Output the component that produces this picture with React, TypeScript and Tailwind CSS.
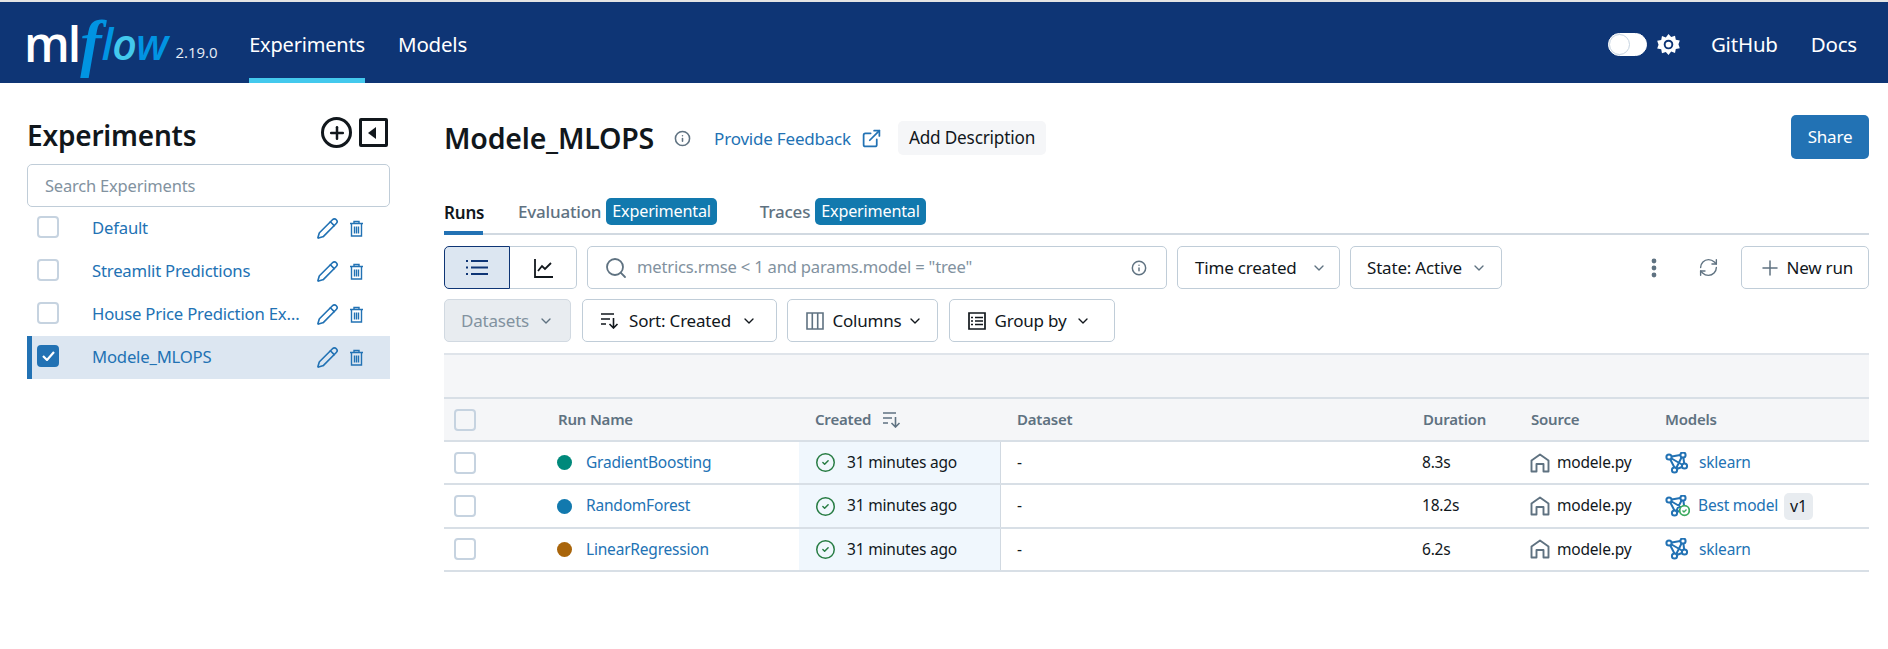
import { ChevronDown, CircleCheck, ExternalLink, Info, Pencil, Plus, RefreshCw, Search } from 'lucide-react';
import type { ReactNode } from 'react';

const experiments = [
	{ name: 'Default', active: false },
	{ name: 'Streamlit Predictions', active: false },
	{ name: 'House Price Prediction Experiment', active: false },
	{ name: 'Modele_MLOPS', active: true },
];

const runs = [
	{ name: 'GradientBoosting', dot: 'bg-[#00897b]', duration: '8.3s', model: 'sklearn', best: false },
	{ name: 'RandomForest', dot: 'bg-[#1279ae]', duration: '18.2s', model: 'Best model', best: true },
	{ name: 'LinearRegression', dot: 'bg-[#a9650b]', duration: '6.2s', model: 'sklearn', best: false },
];

const TrashIcon = () => (
	<svg width="15" height="17" viewBox="0 0 15 17" fill="none" stroke="currentColor" strokeWidth="1.4" className="text-[#2272b4]">
		<path d="M1 3.5h13M5 3.5V1.5h5v2M2.5 3.5v12.5h10V3.5M5.5 6.5v7M7.5 6.5v7M9.5 6.5v7" />
	</svg>
);

const SortIcon = ({ color = 'text-[#11171c]' }: { color?: string }) => (
	<svg width="19" height="17" viewBox="0 0 19 17" fill="none" stroke="currentColor" strokeWidth="1.6" className={color}>
		<path d="M1 2h13M1 7h9M1 12h5M13.5 6v10M9.5 12l4 4 4-4" />
	</svg>
);

const HouseIcon = () => (
	<svg width="20" height="20" viewBox="0 0 20 20" fill="none" stroke="#5f7281" strokeWidth="1.9" className="shrink-0">
		<path d="M1.5 18.5V7.5L10 1.5l8.5 6v11h-5V11h-7v7.5z" strokeLinejoin="round" />
	</svg>
);

const ModelIcon = ({ best }: { best: boolean }) => (
	<svg width="25" height="22" viewBox="0 0 25 22" fill="none" className="shrink-0">
		<g stroke="#2272b4" strokeWidth="2">
			<path d="M4 5l14-2.5M4 5l6.5 12.5M4 5l15.5 9M18 2.5l1.5 11.5M10.5 17.5l9-3.5M18 2.5l-7.5 15" />
			<circle cx="4" cy="5" r="2.6" fill="white" />
			<circle cx="18" cy="3" r="2.6" fill="white" />
			<circle cx="19.5" cy="14" r="2.6" fill="white" />
			<circle cx="9.5" cy="18" r="2.6" fill="white" />
		</g>
		{best && (
			<g>
				<circle cx="19.5" cy="15.5" r="4.8" fill="white" stroke="#3caa60" strokeWidth="1.8" />
				<path d="M17.5 15.5l1.5 1.5 2.5-2.5" stroke="#3caa60" strokeWidth="1.4" />
			</g>
		)}
	</svg>
);

const ToolbarButton = ({ children, className }: { children: ReactNode; className: string }) => (
	<div className={`h-[43px] shrink-0 flex items-center justify-between bg-white border border-[#c0cdd8] rounded-[5px] text-[#11171c] whitespace-nowrap ${className}`}>
		{children}
	</div>
);

const Checkbox = ({ checked = false }: { checked?: boolean }) => (
	<div className={`w-[22px] h-[22px] rounded-[4px] flex items-center justify-center border-2 ${checked ? 'bg-[#2272b4] border-[#2272b4]' : 'bg-white border-[#c6d3e0]'}`}>
		{checked && (
			<svg width="13" height="10" viewBox="0 0 13 10" fill="none" stroke="white" strokeWidth="2.2">
				<path d="M1 5l4 4 7-8" />
			</svg>
		)}
	</div>
);

const Badge = () => (
	<span className="h-[27px] px-[6px] bg-[#1279ae] text-white rounded-[5px] flex items-center text-[16.2px] font-normal">Experimental</span>
);

const App = () => {
	return (
		<div className="w-[1888px] h-[649px] overflow-hidden bg-white text-[#11171c] font-['Noto_Sans',sans-serif] text-[15.5px] tracking-[-0.2px]">
			<div className="h-[2px] bg-[#e4e4e4]" />

			{/* Header */}
			<header className="h-[81px] bg-[#0e3575] flex items-stretch justify-between pl-[24px] pr-[31px] text-white">
				<div className="flex items-stretch">
					<div className="w-[193px] flex items-center shrink-0 pt-[2px] font-['Open_Sans',sans-serif] tracking-normal">
						<span className="text-[48px] leading-none font-semibold tracking-[-2px]">ml</span>
						<span className="text-[64px] leading-none italic font-bold text-[#0194e2] ml-[1px] -mt-[2px] font-['Liberation_Serif',serif]">f</span>
						<span className="text-[43px] leading-none italic font-semibold text-[#0194e2] tracking-[-1px]">l</span>
						<span className="text-[43px] leading-none italic font-semibold text-[#43c9ed] tracking-[-1px]">o</span>
						<span className="text-[43px] leading-none italic font-semibold text-[#0194e2] tracking-[-1px]">w</span>
						<span className="text-[15px] ml-[8px] mt-[18px] text-[#e8eef5]">2.19.0</span>
					</div>
					<div className="ml-[32px] w-[116px] flex items-center justify-center text-[20px] border-b-[5px] border-[#43c9ed] pt-[9px]">Experiments</div>
					<div className="ml-[33px] flex items-center text-[20.5px] pt-[4px]">Models</div>
				</div>
				<div className="flex items-center text-[20.5px] pt-[4px]">
					<div className="w-[39px] h-[23px] rounded-full bg-white relative border border-white">
						<div className="absolute left-0 top-0 h-[21px] w-[21px] rounded-full bg-white border border-[#c6d3e0]" />
					</div>
					<svg width="23" height="25" viewBox="0 0 24 24" fill="white" className="ml-[10px]">
						<path fillRule="evenodd" d="M12 1l2.8 3.2 4-1.4.8 4.2 4.2.8-1.4 4 1.4 4-4.2.8-.8 4.2-4-1.4L12 23l-2.8-3.2-4 1.4-.8-4.2-4.2-.8 1.4-4-1.4-4 4.2-.8.8-4.2 4 1.4zM12 7a5 5 0 100 10 5 5 0 000-10zm0 2a3 3 0 110 6 3 3 0 010-6z" />
					</svg>
					<span className="ml-[31px]">GitHub</span>
					<span className="ml-[33px]">Docs</span>
				</div>
			</header>

			<div className="flex pl-[27px]">
				{/* Sidebar */}
				<aside className="w-[363px] shrink-0">
					<div className="h-[81px] flex items-center justify-between pt-[23px]">
						<h1 className="text-[28px] font-semibold leading-none">Experiments</h1>
						<div className="flex items-center gap-[7px] pr-[2px] -mt-[5px]">
							<div className="w-[31px] h-[31px] rounded-full border-[3px] border-[#11171c] flex items-center justify-center">
								<Plus size={20} strokeWidth={3} />
							</div>
							<div className="w-[29px] h-[29px] rounded-[2px] border-[3px] border-[#11171c] flex items-center justify-center">
								<div className="w-0 h-0 border-y-[6px] border-y-transparent border-r-[8px] border-r-[#11171c] -ml-[3px]" />
							</div>
						</div>
					</div>
					<div className="h-[43px] border border-[#c0cdd8] rounded-[5px] flex items-center px-[17px] pt-[2px] text-[#82929f] text-[16.5px]">Search Experiments</div>
					<ul>
						{experiments.map((experiment) => (
							<li
								key={experiment.name}
								className={`h-[43px] flex items-start pt-[9px] pr-[26px] text-[#2272b4] text-[16.7px] ${experiment.active ? 'bg-[#dce6f1] border-l-[5px] border-[#2272b4] pl-[5px]' : 'pl-[10px]'} `}
							>
								<div className="w-[55px] shrink-0"><Checkbox checked={experiment.active} /></div>
								<span className="w-[208px] truncate leading-[22px] mt-[1px]">{experiment.name}</span>
								<div className="flex items-center gap-[10px] ml-auto pt-[1px]">
									<Pencil size={23} strokeWidth={1.7} />
									<TrashIcon />
								</div>
							</li>
						))}
					</ul>
				</aside>

				{/* Main */}
				<main className="ml-[54px] w-[1425px] shrink-0 relative">
					<div className="h-[75px] pt-[33px] flex items-start justify-between">
						<div className="flex items-center h-[44px]">
							<h2 className="text-[28.5px] font-semibold leading-none">Modele_MLOPS</h2>
							<Info size={17} strokeWidth={2.2} className="ml-[20px] text-[#5f7281]" />
							<span className="ml-[23px] text-[#2272b4] text-[17px] pt-[1px]">Provide Feedback</span>
							<ExternalLink size={21} className="ml-[10px] text-[#2272b4]" />
							<div className="ml-[16px] h-[34px] px-[11px] rounded-[5px] bg-[#f5f6f8] flex items-center text-[17.2px]">Add Description</div>
						</div>
						<div className="w-[78px] h-[44px] -mt-[1px] bg-[#2272b4] rounded-[5px] text-white flex items-center justify-center text-[17px]">Share</div>
					</div>

					{/* Tabs */}
					<div className="mt-[40px] h-[37px] border-b-2 border-[#d1d9e1] flex items-start text-[17px]">
						<div className="h-[37px] w-[39px] border-b-[4px] border-[#2272b4] font-semibold pt-[2px]">Runs</div>
						<div className="flex items-center ml-[35px] gap-[5px] text-[#5f7281] font-medium"><span>Evaluation</span><Badge /></div>
						<div className="flex items-center ml-[43px] gap-[5px] text-[#5f7281] font-medium"><span>Traces</span><Badge /></div>
					</div>

					{/* Toolbar rows */}
					<div className="mt-[11px] flex items-center">
						<div className="flex h-[43px] w-[133px] shrink-0">
							<div className="w-[66px] bg-[#dce6f1] border border-[#0e3575] rounded-l-[5px] flex items-center justify-center">
								<svg width="22" height="17" viewBox="0 0 22 17" fill="none" stroke="#0e3575" strokeWidth="2">
									<path d="M5 2h17M5 8.5h17M5 15h17M0 2h2M0 8.5h2M0 15h2" />
								</svg>
							</div>
							<div className="flex-1 border border-l-0 border-[#c0cdd8] rounded-r-[5px] flex items-center justify-center">
								<svg width="19" height="20" viewBox="0 0 19 20" fill="none" stroke="#11171c" strokeWidth="1.8">
									<path d="M1 1v18h18M4 13l4-5 3 3 6-6" />
								</svg>
							</div>
						</div>
						<div className="ml-[10px] w-[581px] h-[43px] border border-[#c0cdd8] rounded-[5px] flex items-center px-[16px] text-[#82929f] text-[16.6px]">
							<Search size={24} strokeWidth={1.8} className="text-[#5f7281] shrink-0" />
							<span className="ml-[9px]">metrics.rmse &lt; 1 and params.model = "tree"</span>
							<Info size={16} strokeWidth={2.2} className="ml-auto mr-[3px] text-[#5f7281]" />
						</div>
						<ToolbarButton className="ml-[10px] w-[163px] pl-[17px] pr-[12px]">
							<span className="text-[17px]">Time created</span>
							<ChevronDown size={16} className="text-[#5f7281]" />
						</ToolbarButton>
						<ToolbarButton className="ml-[10px] w-[152px] pl-[16px] pr-[14px]">
							<span className="text-[17px]">State: Active</span>
							<ChevronDown size={16} className="text-[#5f7281]" />
						</ToolbarButton>
						<svg width="6" height="20" viewBox="0 0 6 20" fill="#5f7281" className="ml-[149px]">
							<circle cx="3" cy="3" r="2.4" /><circle cx="3" cy="10" r="2.4" /><circle cx="3" cy="17" r="2.4" />
						</svg>
						<RefreshCw size={21} strokeWidth={1.6} className="ml-[41px] text-[#5f7281]" />
						<ToolbarButton className="ml-[22px] w-[128px] pl-[16px] pr-[15px]">
							<Plus size={24} strokeWidth={1.5} className="text-[#5f7281]" />
							<span className="text-[17px]">New run</span>
						</ToolbarButton>
					</div>

					<div className="mt-[10px] flex items-center text-[17px]">
						<div className="w-[127px] h-[43px] rounded-[5px] bg-[#e8ecf0] border border-[#d1d9e1] text-[#82929f] flex items-center justify-between pl-[16px] pr-[16px]">
							<span>Datasets</span>
							<ChevronDown size={16} className="text-[#5f7281]" />
						</div>
						<ToolbarButton className="ml-[11px] w-[195px] pl-[17px] pr-[19px]">
							<SortIcon />
							<span>Sort: Created</span>
							<ChevronDown size={16} />
						</ToolbarButton>
						<ToolbarButton className="ml-[10px] w-[151px] pl-[18px] pr-[14px]">
							<svg width="18" height="18" viewBox="0 0 18 18" fill="none" stroke="#5f7281" strokeWidth="1.6"><path d="M1 1h16v16H1zM6.3 1v16M11.7 1v16" /></svg>
							<span>Columns</span>
							<ChevronDown size={16} className="-ml-[3px]" />
						</ToolbarButton>
						<ToolbarButton className="ml-[11px] w-[166px] pl-[18px] pr-[23px]">
							<svg width="18" height="18" viewBox="0 0 18 18" fill="none" stroke="#11171c" strokeWidth="1.7"><path d="M1 1h16v16H1zM7 5.5h8M7 9h8M7 12.5h8M3 5.5h2M3 9h2M3 12.5h2" /></svg>
							<span>Group by</span>
							<ChevronDown size={16} />
						</ToolbarButton>
					</div>

					{/* Runs table */}
					<div className="mt-[11px] border-t-2 border-[#dfe4ea] h-[44px] bg-[#f5f6f8]" />
					<div className="h-[45px] grid grid-cols-[97px_258px_202px_405px_108px_135px_1fr] items-center bg-[#f5f6f8] border-y-2 border-[#d8dfe6] text-[#5f7281] font-semibold text-[15px]">
						<div className="pl-[10px]"><div className="w-[22px] h-[22px] rounded-[4px] border-2 border-[#c6d3e0]" /></div>
						<div className="pl-[17px]">Run Name</div>
						<div className="pl-[16px] flex items-center gap-[11px]"><span>Created</span><SortIcon color="text-[#5f7281]" /></div>
						<div className="pl-[16px]">Dataset</div>
						<div className="pl-[17px]">Duration</div>
						<div className="pl-[17px]">Source</div>
						<div className="pl-[16px]">Models</div>
					</div>
					{runs.map((run) => (
						<div key={run.name} className="h-[43.4px] grid grid-cols-[97px_258px_202px_405px_108px_135px_1fr] items-center border-b-2 border-[#d8dfe6]">
							<div className="pl-[10px]"><Checkbox /></div>
							<div className="pl-[16px] flex items-center gap-[14px] text-[#2272b4]">
								<span className={`w-[15px] h-[15px] rounded-full ${run.dot}`} />
								<span>{run.name}</span>
							</div>
							<div className="h-full pl-[16px] flex items-center gap-[11px] bg-[#f0f7fd] border-r border-[#d1d9e1]">
								<CircleCheck size={21} strokeWidth={1.7} className="text-[#277c43]" />
								<span>31 minutes ago</span>
							</div>
							<div className="pl-[16px]">-</div>
							<div className="pl-[16px]">{run.duration}</div>
							<div className="pl-[16px] flex items-center gap-[7px]"><HouseIcon /><span>modele.py</span></div>
							<div className="pl-[16px] flex items-center gap-[8px] text-[#2272b4]">
								<ModelIcon best={run.best} />
								<span className={run.best ? '' : 'ml-[1px]'}>{run.model}</span>
								{run.best && <span className="-ml-[2px] h-[27px] w-[29px] rounded-[5px] bg-[#e8ecf0] text-[#11171c] text-[16px] flex items-center justify-center">v1</span>}
							</div>
						</div>
					))}
				</main>
			</div>
		</div>
	);
};

export default App;
